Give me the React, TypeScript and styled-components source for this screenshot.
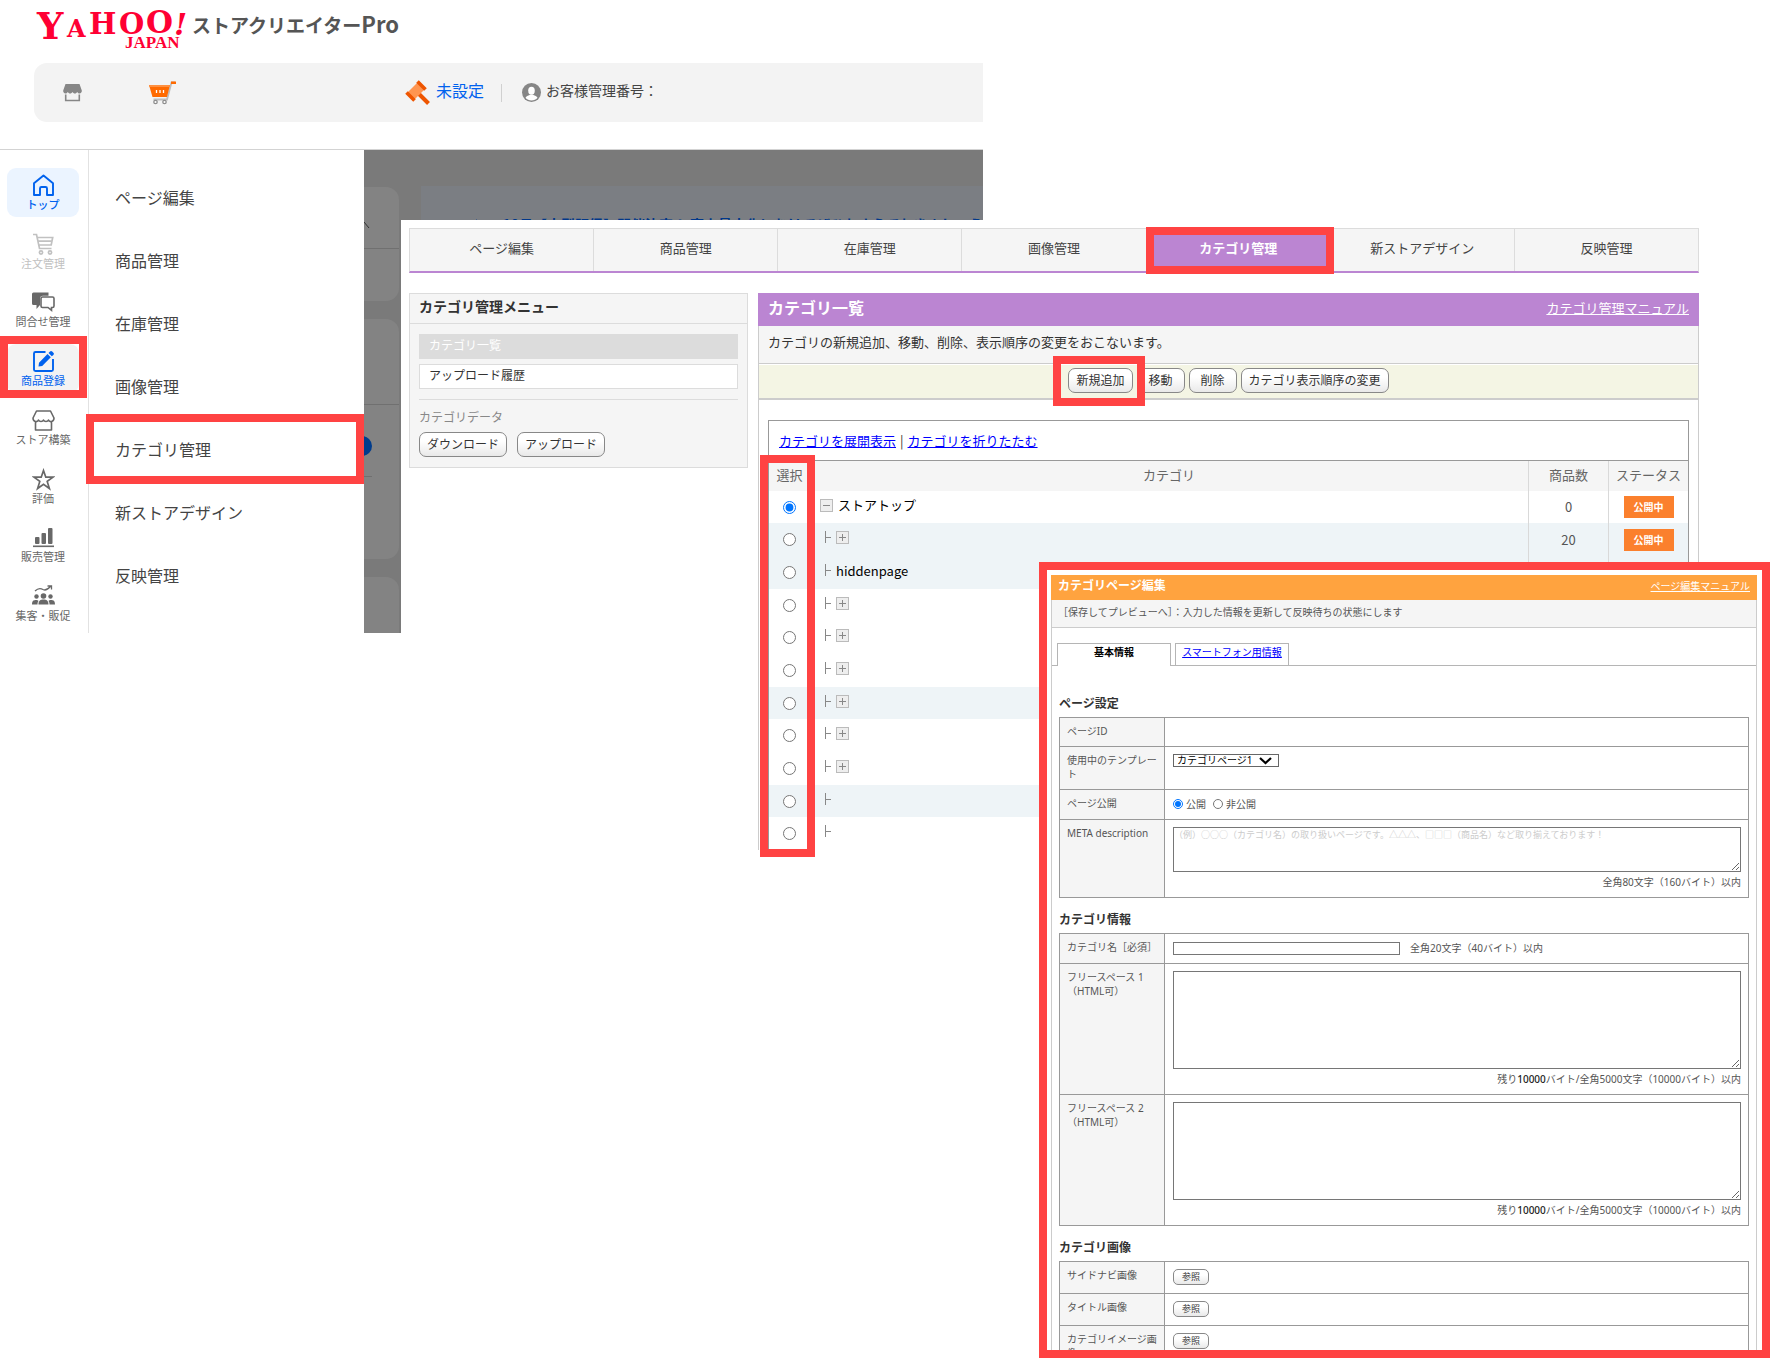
import React from 'react';
import styled, { createGlobalStyle, css } from 'styled-components';

const GlobalStyle = createGlobalStyle`
  *, *::before, *::after { box-sizing: border-box; }
  body {
    margin: 0;
    background: #fff;
    color: #333;
    font-family: "Noto Sans CJK JP", "Noto Sans", sans-serif;
    font-size: 13px;
  }
  ul, h1, h2, p { margin: 0; padding: 0; }
  ul { list-style: none; }
  button, input, select, textarea { font-family: inherit; margin: 0; }
`;

const RED = '#ff4343';
const PURPLE = '#bb85d2';

const Canvas = styled.div`
  position: relative;
  min-width: 1400px;
  height: 100vh;
  min-height: 1358px;
  overflow: hidden;
  background: #fff;
`;

const Callout = styled.span<{ $inset: string }>`
  position: absolute;
  inset: ${(p) => p.$inset};
  border: 8px solid ${RED};
  pointer-events: none;
  z-index: 2;
`;

const ColumnCallout = styled(Callout)`
  width: 55px;
`;

/* ---------- Store creator window ---------- */

const CreatorWindow = styled.section`
  position: absolute;
  top: 0;
  left: 0;
  right: 787px;
  height: 633px;
  display: flex;
  flex-direction: column;
`;

const CreatorHeader = styled.header`
  flex: 0 0 150px;
  padding-left: 34px;
  border-bottom: 1px solid #d3d3d3;
`;

const Brand = styled.div`
  display: flex;
  gap: 5px;
  height: 63px;
`;

const BrandName = styled.h1`
  padding-top: 9px;
  font-size: 19px;
  line-height: 28px;
  color: #555;
`;

const BrandLatin = styled.span`
  font-size: 22px;
`;

const AccountBar = styled.div`
  display: flex;
  align-items: center;
  height: 59px;
  padding-left: 29px;
  background: #f3f3f3;
  border-radius: 13px 0 0 13px;
`;

const BarSlot = styled.div<{ $width: number }>`
  display: flex;
  align-items: center;
  width: ${(p) => p.$width}px;
`;

const AuctionLink = styled.a`
  font-size: 16px;
  line-height: 24px;
  margin: 0 17px 6px 5px;
  color: #0062ee;
  text-decoration: none;
`;

const CustomerNumber = styled.div`
  display: flex;
  align-items: center;
  gap: 5px;
  padding-left: 20px;
  border-left: 1px solid #d0d0d0;
  height: 18px;
  font-size: 14px;
  color: #444;
  span { margin-bottom: 5px; }
`;

const CreatorBody = styled.div`
  flex: 1;
  min-height: 0;
  display: flex;
`;

const SideNav = styled.nav`
  width: 89px;
  border-right: 1px solid #e2e2e2;
  background: #fff;
`;

const SideList = styled.ul`
  height: 100%;
  display: flex;
  flex-direction: column;
  justify-content: space-between;
  padding: 18px 9px 5px 7px;
`;

const SideItem = styled.li`
  position: relative;
`;

type Tone = 'current' | 'selected' | 'muted' | 'plain';
const toneColor: Record<Tone, string> = {
  current: '#0062ee',
  selected: '#0062ee',
  muted: '#c1c1c1',
  plain: '#686868',
};

const SideLink = styled.a<{ $tone: Tone }>`
  display: flex;
  flex-direction: column;
  align-items: center;
  height: 49px;
  padding-top: 6px;
  border-radius: 9px;
  font-size: 11px;
  line-height: 14px;
  white-space: nowrap;
  text-decoration: none;
  color: ${(p) => toneColor[p.$tone]};
  background: ${(p) => (p.$tone === 'current' ? '#ebf4ff' : p.$tone === 'selected' ? '#f3f3f3' : 'transparent')};
  font-weight: ${(p) => (p.$tone === 'current' ? 500 : 400)};
`;

const Flyout = styled.ul`
  width: 275px;
  padding-top: 16px;
  background: #fff;
  z-index: 1;
`;

const FlyoutItem = styled.li`
  position: relative;
`;

const FlyoutLink = styled.a`
  display: flex;
  align-items: center;
  height: 63px;
  padding: 0 26px 2px;
  font-size: 16px;
  color: #444;
  text-decoration: none;
`;

const Backdrop = styled.div`
  flex: 1;
  display: flex;
  gap: 22px;
  min-width: 0;
  overflow: hidden;
  background: #7a7a7a;
`;

const DimCards = styled.div`
  flex: 0 0 35px;
  display: flex;
  flex-direction: column;
  gap: 18px;
  padding-top: 37px;
`;

const DimCard = styled.div<{ $height: number }>`
  flex: 0 0 ${(p) => p.$height}px;
  background: #838383;
  border-radius: 0 13px 13px 0;
`;

const DimCardHead = styled.div<{ $height: number }>`
  height: ${(p) => p.$height}px;
  padding-top: 27px;
  border-bottom: 1px solid #707070;
`;

const DimDot = styled.div`
  width: 20px;
  height: 20px;
  margin: 31px 0 20px -12px;
  border-radius: 50%;
  background: #003c8c;
`;

const DimRule = styled.div`
  width: 8px;
  border-top: 1px solid #707070;
`;

const Notice = styled.div`
  flex: 1;
  min-width: 0;
  display: flex;
  align-items: flex-start;
  gap: 25px;
  margin-top: 36px;
  padding: 28px 0 0 52px;
  overflow: hidden;
  background: #7b7e83;
  color: #00378a;
  font-size: 14px;
  font-weight: 700;
  line-height: 20px;
  white-space: nowrap;
`;

/* ---------- Category list window ---------- */

const ListWindow = styled.section`
  position: absolute;
  top: 220px;
  left: 401px;
  right: 71px;
  padding: 8px 0 0 8px;
  background: #fff;
`;

const TabBar = styled.ul`
  display: flex;
  border: 1px solid #dcdcdc;
  border-bottom: 2px solid ${PURPLE};
  background: #f5f5f5;
`;

const TabItem = styled.li`
  position: relative;
  flex: 1;
  & + & { border-left: 1px solid #dcdcdc; }
`;

const TabLink = styled.a<{ $active?: boolean }>`
  display: block;
  padding: 9px 0 13px;
  line-height: 20px;
  text-align: center;
  text-decoration: none;
  color: #444;
  ${(p) => p.$active && css`
    color: #fff;
    font-weight: 700;
    background: ${PURPLE};
  `}
`;

const Columns = styled.div`
  display: flex;
  align-items: flex-start;
  gap: 10px;
  margin-top: 20px;
`;

const MenuPanel = styled.aside`
  flex: 0 0 339px;
  border: 1px solid #dcdcdc;
  background: #f5f5f5;
  font-size: 12px;
`;

const MenuTitle = styled.h2`
  padding: 3px 9px 7px;
  font-size: 14px;
  line-height: 19px;
  border-bottom: 1px solid #dcdcdc;
`;

const MenuBody = styled.div`
  padding: 10px 9px;
`;

const MenuLinks = styled.ul`
  display: grid;
  gap: 5px;
  padding-bottom: 10px;
  border-bottom: 1px solid #dcdcdc;
`;

const MenuLink = styled.a<{ $current?: boolean }>`
  display: block;
  padding: 1px 9px 4px;
  line-height: 18px;
  border: 1px solid #dcdcdc;
  text-decoration: none;
  color: ${(p) => (p.$current ? '#fff' : '#333')};
  background: ${(p) => (p.$current ? '#dcdcdc' : '#fff')};
`;

const MenuCaption = styled.p`
  padding: 8px 0 6px;
  line-height: 18px;
  color: #888;
`;

const ButtonRow = styled.div<{ $gap: number; $center?: boolean }>`
  display: flex;
  gap: ${(p) => p.$gap}px;
  justify-content: ${(p) => (p.$center ? 'center' : 'flex-start')};
`;

const PillButton = styled.button<{ $small?: boolean }>`
  display: block;
  min-width: ${(p) => (p.$small ? 36 : 48)}px;
  height: ${(p) => (p.$small ? 16 : 25)}px;
  padding: ${(p) => (p.$small ? '0 4px 1px' : '0 7px 2px')};
  font-size: ${(p) => (p.$small ? 9 : 12)}px;
  line-height: ${(p) => (p.$small ? 12 : 18)}px;
  border: 1px solid #888;
  border-radius: ${(p) => (p.$small ? 5 : 7)}px;
  color: #333;
  background: linear-gradient(#fff 35%, #e9e9e9);
  white-space: nowrap;
`;

const Anchor = styled.span`
  position: relative;
`;

const ListMain = styled.main`
  flex: 1;
  min-width: 0;
`;

const ListHeader = styled.header`
  display: flex;
  justify-content: space-between;
  align-items: center;
  height: 33px;
  padding: 0 10px 5px;
  background: ${PURPLE};
  color: #fff;
`;

const ListTitle = styled.h2`
  font-size: 16px;
  line-height: 24px;
`;

const HeaderLink = styled.a`
  color: #fff;
`;

const ListFrame = styled.div`
  border: solid #ccc;
  border-width: 0 1px;
`;

const ListLead = styled.p`
  padding: 6px 9px 11px;
  line-height: 20px;
  background: #f5f5f5;
  border-bottom: 1px solid #ccc;
`;

const Toolbar = styled.div`
  padding: 3px 0 5px;
  margin-top: 1px;
  background: #f4f5e4;
  border-bottom: 2px solid #ccc;
`;

const TreeBox = styled.div`
  position: relative;
  margin: 20px 9px 0;
  border: 1px solid #999;
  border-bottom: 0;
`;

const TreeTools = styled.div`
  display: flex;
  gap: 4px;
  padding: 10px 10px 9px;
  line-height: 20px;
  border-bottom: 1px solid #999;
  a { color: #00f; }
`;

const TreeTable = styled.table`
  width: 100%;
  table-layout: fixed;
  border-collapse: separate;
  border-spacing: 0;
  th {
    height: 30px;
    padding: 0 0 3px;
    font-weight: 400;
    line-height: 20px;
    color: #666;
    background: #f5f5f5;
  }
  th:first-child { width: 41px; }
  th:nth-child(n + 3) { width: 80px; }
  th:nth-child(n + 3), td:nth-child(n + 3) { border-left: 1px solid #d9d9d9; }
`;

const TreeRow = styled.tr<{ $tint: boolean }>`
  background: ${(p) => (p.$tint ? '#eef4f7' : '#fff')};
  td { height: 33px; padding: 0; text-align: center; line-height: 20px; color: #555; }
  &:nth-child(3n + 1) td { height: 32px; }
`;

const Radio = styled.input.attrs({ type: 'radio' })<{ $small?: boolean }>`
  display: block;
  width: ${(p) => (p.$small ? 10 : 13)}px;
  height: ${(p) => (p.$small ? 10 : 13)}px;
`;

const RadioCell = styled.label`
  display: flex;
  justify-content: center;
`;

const TreeName = styled.div`
  display: flex;
  align-items: center;
  gap: 5px;
  padding: 0 0 4px 10px;
  color: #000;
`;

const Badge = styled.span`
  display: block;
  width: 50px;
  margin: 0 auto;
  padding: 3px 0;
  font-size: 10px;
  font-weight: 700;
  line-height: 16px;
  color: #fff;
  background: #fb802d;
`;

/* ---------- Category page editor window ---------- */

const EditorWindow = styled.section`
  position: absolute;
  top: 562px;
  left: 1039px;
  right: 0;
  bottom: 0;
  overflow: hidden;
  padding: 5px 5px 0 4px;
  border: 8px solid ${RED};
  background: #fff;
  font-family: "Noto Sans", "Noto Sans CJK JP", sans-serif;
  font-size: 10px;
  line-height: 14px;
  color: #555;
`;

const EditorHeader = styled.header`
  display: flex;
  justify-content: space-between;
  align-items: center;
  height: 25px;
  padding: 0 7px 3px;
  background: #ffa33f;
  color: #fff;
`;

const EditorTitle = styled.h2`
  font-size: 12px;
  line-height: 18px;
`;

const EditorFrame = styled.div`
  border: solid #ccc;
  border-width: 0 1px;
`;

const EditorLead = styled.p`
  padding: 5px 6px 8px;
  background: #f5f5f5;
  border-bottom: 1px solid #ccc;
`;

const EditorTabs = styled.ul`
  display: flex;
  gap: 4px;
  margin-top: 15px;
  padding-left: 5px;
  border-bottom: 1px solid #b5b5b5;
`;

const EditorTab = styled.li<{ $active?: boolean }>`
  width: 114px;
  height: 22px;
  text-align: center;
  line-height: 16px;
  border: 1px solid #b5b5b5;
  border-bottom: 0;
  background: #fff;
  a { color: #00f; }
  ${(p) => p.$active && css`
    height: 23px;
    margin-bottom: -1px;
    font-weight: 700;
    a { color: #000; text-decoration: none; }
  `}
`;

const EditorBody = styled.div`
  padding: 16px 7px 0;
`;

const SectionTitle = styled.h2`
  padding: 14px 0 5px;
  font-size: 12px;
  line-height: 16px;
  color: #333;
`;

const FormTable = styled.table`
  width: 100%;
  table-layout: fixed;
  border-collapse: collapse;
  th, td {
    border: 1px solid #999;
    vertical-align: top;
  }
  th {
    width: 105px;
    padding: 6px 7px 8px;
    text-align: left;
    font-weight: 400;
    background: #f5f5f5;
  }
  td { padding: 7px 7px 8px 8px; }
`;

const SelectWrap = styled.div`
  position: relative;
  width: 106px;
  svg { position: absolute; right: 7px; top: 3px; pointer-events: none; }
`;

const TemplateSelect = styled.select`
  appearance: none;
  display: block;
  width: 100%;
  height: 13px;
  padding: 0 3px;
  font-size: 10px;
  line-height: 11px;
  border: 1px solid #666;
  border-radius: 0;
  background: #fff;
  color: #000;
`;

const RadioGroup = styled.div`
  display: flex;
  gap: 7px;
`;

const RadioLabel = styled.label`
  display: flex;
  align-items: center;
  gap: 3px;
  line-height: 14px;
`;

const TextArea = styled.textarea<{ $height: number }>`
  display: block;
  width: 100%;
  height: ${(p) => p.$height}px;
  padding: 1px 0;
  font-size: 9px;
  line-height: 12px;
  border: 1px solid #767676;
  border-radius: 0;
  &::placeholder { color: #ccc; font-family: "Noto Sans CJK JP", sans-serif; }
`;

const Note = styled.p`
  margin-top: 3px;
  text-align: right;
  b { font-weight: 500; color: #222; }
`;

const NameLine = styled.div`
  display: flex;
  align-items: center;
  gap: 10px;
`;

const NameInput = styled.input`
  width: 227px;
  height: 13px;
  padding: 0 2px;
  font-size: 10px;
  border: 1px solid #767676;
`;

/* ---------- Drawings ---------- */

const YahooLogo = () => (
  <svg width="153" height="60" viewBox="34 0 153 60" role="img" aria-label="Yahoo! JAPAN" fill="#ff0033">
    <g fontFamily='"DejaVu Serif", serif' fontWeight="700">
      <text x="37" y="39" fontSize="37">Y</text>
      <text x="67" y="37" fontSize="24">A</text>
      <text x="89" y="34" fontSize="29">H</text>
      <text x="119" y="34" fontSize="29">O</text>
      <text x="146" y="33" fontSize="31">O</text>
      <text x="174" y="35" fontSize="30" fontStyle="italic">!</text>
    </g>
    <text x="125" y="48" fontFamily='"Liberation Serif", serif' fontWeight="700" fontSize="17">JAPAN</text>
  </svg>
);

const ShopSolid = () => (
  <svg width="19" height="19" viewBox="0 0 19 19" fill="#868686">
    <path d="M2.5 1h14L18.8 7.5c.2 1.600-.9 2.900-2.300 2.900-1 0-1.900-.6-2.300-1.500-.4.900-1.300 1.500-2.300 1.500s-2-.6-2.400-1.500c-.4.900-1.400 1.500-2.400 1.500s-1.900-.6-2.300-1.500c-.4.900-1.300 1.500-2.300 1.500C1 10.400 0 9.100.2 7.500z" />
    <path d="M2.700 11.500v6h13.600v-6" fill="none" stroke="#868686" strokeWidth="1.600" />
  </svg>
);

const OrangeCart = () => (
  <svg width="27" height="24" viewBox="0 0 27 24">
    <path d="M26 1.500h-3.500L18 18.500H4.500" fill="none" stroke="#bdbdbd" strokeWidth="1.800" />
    <path d="M22 .5h5v2.500h-5z" fill="#ff6a00" />
    <path d="M0 4h21l-3 12H3.500z" fill="#ff6a00" />
    <path d="M0 4h21l-.5 2H.5z" fill="#ff9040" />
    <path d="M7.500 9v3M11 9v3M14.500 9v3" stroke="#fff" strokeWidth="1.300" />
    <circle cx="6.500" cy="21" r="1.700" fill="#fff" stroke="#8d8d8d" strokeWidth="1.300" />
    <circle cx="15.500" cy="21" r="1.700" fill="#fff" stroke="#8d8d8d" strokeWidth="1.300" />
  </svg>
);

const Gavel = () => (
  <svg width="26" height="26" viewBox="0 0 26 26">
    <path d="M13.500 13.500l10 10" stroke="#ee5500" strokeWidth="4" />
    <path d="M2.500 12.500L12.500 2.500l7 7-10 10z" fill="#ff9550" />
    <path d="M12.500 1.500l8 8M1.500 12.500l8 8" stroke="#ee5500" strokeWidth="3.600" />
  </svg>
);

const UserBadge = () => (
  <svg width="19" height="19" viewBox="0 0 19 19">
    <circle cx="9.500" cy="9.500" r="9.500" fill="#868686" />
    <ellipse cx="9.500" cy="7.800" rx="3.300" ry="4" fill="#fff" />
    <path d="M3.500 14.800c1-2 3.500-2.200 4.500-3h3c1 .8 3.500 1 4.500 3-1.500 1.700-3.600 2.600-6 2.600s-4.500-.9-6-2.600z" fill="#fff" />
  </svg>
);

const iconProps = {
  width: 23,
  height: 23,
  viewBox: '0 0 23 23',
  fill: 'none',
  stroke: 'currentColor',
  strokeWidth: 1.6,
} as const;

const HomeIcon = () => (
  <svg {...iconProps} strokeWidth={1.9}>
    <path d="M2 9.200L11.500 1.500 21 9.200V21h-6v-6.500a1.500 1.500 0 0 0-1.500-1.500h-4A1.500 1.500 0 0 0 8 14.500V21H2z" strokeLinejoin="round" />
  </svg>
);

const CartIcon = () => (
  <svg {...iconProps} strokeWidth={1.700}>
    <path d="M1 1.500h3.500L7.500 15.500h12M5.200 4.500h15.500l-1.500 7.500H6.800M6.200 8.200h13.600" />
    <circle cx="9" cy="19.500" r="1.600" />
    <circle cx="18" cy="19.500" r="1.600" />
  </svg>
);

const ChatIcon = () => (
  <svg {...iconProps}>
    <path d="M1.500 1.500h15v3.200H11a3 3 0 0 0-3 3V14l-3.500 4v-4H1.500A1.500 1.500 0 0 1 0 12.500V3a1.500 1.500 0 0 1 1.500-1.500z" fill="currentColor" stroke="none" />
    <path d="M10.500 6h10a1.500 1.500 0 0 1 1.500 1.500v7.500a1.500 1.500 0 0 1-1.500 1.500H19.500v2.800l-3.500-2.800h-5.500A1.500 1.500 0 0 1 9 15V7.500A1.500 1.500 0 0 1 10.500 6z" />
  </svg>
);

const EditIcon = () => (
  <svg {...iconProps} strokeWidth={1.900}>
    <path d="M13.500 2H3.500A1.500 1.500 0 0 0 2 3.500v16A1.500 1.500 0 0 0 3.500 21h16a1.500 1.500 0 0 0 1.500-1.500V9" />
    <path d="M7 12.800L15.500 4l3.300 3.300L10.200 16 6.500 16.500zM16.500 3l1.500-1.500a1.500 1.500 0 0 1 2.200 0l1.200 1.200a1.500 1.500 0 0 1 0 2.200L19.800 6.300z" fill="currentColor" stroke="none" />
  </svg>
);

const ShopIcon = () => (
  <svg {...iconProps}>
    <path d="M4.500 2h14l3.500 7c0 4-4.500 4.500-5.500 2-1 2-4 2-5 0-1 2-4 2-5 0C5.500 13.500 1 13 1 9zM3.500 12.500V21h16v-8.500" strokeLinejoin="round" />
  </svg>
);

const StarIcon = () => (
  <svg {...iconProps} strokeWidth={1.700}>
    <path d="M11.500 2.500l2.300 6.700h7.200l-5.800 4.200 2.200 7.100-5.900-4.300-5.900 4.300 2.200-7.100L2 9.200h7.200z" />
  </svg>
);

const ChartIcon = () => (
  <svg {...iconProps} fill="currentColor" stroke="none">
    <rect x="3" y="11" width="4.500" height="7" rx="1" />
    <rect x="9.500" y="7" width="4.500" height="11" rx="1" />
    <rect x="16" y="2" width="4.500" height="16" rx="1" />
    <rect x="1" y="19.500" width="21" height="1.600" />
  </svg>
);

const CrowdIcon = () => (
  <svg {...iconProps} strokeWidth={1.300}>
    <path d="M3 6c3-3 5.500-3 8-1.500 3 1.500 5-.5 7.500-3M15.500 1h4v3.500" />
    <g fill="currentColor" stroke="none">
      <circle cx="4.500" cy="11.500" r="2.200" />
      <circle cx="18.500" cy="11.500" r="2.200" />
      <circle cx="11.500" cy="11" r="2.800" />
      <path d="M0 19.500c0-4 2-4.500 4-4.500 1 0 2 .3 2.500 1-.8 1-1 2-1 3.500zM23 19.500c0-4-2-4.500-4-4.500-1 0-2 .3-2.500 1 .8 1 1 2 1 3.500zM6.500 19.500c0-4 2-5 5-5s5 1 5 5z" />
    </g>
  </svg>
);

const TreeMark = ({ open, branch, box }: { open?: boolean; branch: boolean; box: boolean }) => (
  <>
    {branch && (
      <svg width="11" height="13" viewBox="0 0 11 13" stroke="#888" fill="none">
        <path d="M5.500 0v12M5.500 6.500h5.500" />
      </svg>
    )}
    {box && (
      <svg width="13" height="13" viewBox="0 0 13 13" fill="none">
        <rect x=".5" y=".5" width="12" height="12" fill="#eee" stroke="#bbb" />
        <path d={open ? 'M3 6.500h7' : 'M3 6.500h7M6.500 3v7'} stroke="#888" />
      </svg>
    )}
  </>
);

/* ---------- Data ---------- */

const sideItems: { label: string; tone: Tone; Icon: () => React.ReactElement }[] = [
  { label: 'トップ', tone: 'current', Icon: HomeIcon },
  { label: '注文管理', tone: 'muted', Icon: CartIcon },
  { label: '問合せ管理', tone: 'plain', Icon: ChatIcon },
  { label: '商品登録', tone: 'selected', Icon: EditIcon },
  { label: 'ストア構築', tone: 'plain', Icon: ShopIcon },
  { label: '評価', tone: 'plain', Icon: StarIcon },
  { label: '販売管理', tone: 'plain', Icon: ChartIcon },
  { label: '集客・販促', tone: 'plain', Icon: CrowdIcon },
];

const sections = ['ページ編集', '商品管理', '在庫管理', '画像管理', 'カテゴリ管理', '新ストアデザイン', '反映管理'];
const activeSection = 'カテゴリ管理';

interface Category {
  name?: string;
  root?: boolean;
  box: boolean;
  tint: boolean;
  count?: number;
}

const categories: Category[] = [
  { name: 'ストアトップ', root: true, box: true, tint: false, count: 0 },
  { box: true, tint: true, count: 20 },
  { name: 'hiddenpage', box: false, tint: true },
  { box: true, tint: false },
  { box: true, tint: false },
  { box: true, tint: false },
  { box: true, tint: true },
  { box: true, tint: false },
  { box: true, tint: false },
  { box: false, tint: true },
  { box: false, tint: false },
];

const freeSpaces = [1, 2];
const imageFields = ['サイドナビ画像', 'タイトル画像', 'カテゴリイメージ画像'];

/* ---------- Windows ---------- */

const Creator = () => (
  <CreatorWindow>
    <CreatorHeader>
      <Brand>
        <YahooLogo />
        <BrandName>
          ストアクリエイター<BrandLatin>Pro</BrandLatin>
        </BrandName>
      </Brand>
      <AccountBar>
        <BarSlot $width={86}><ShopSolid /></BarSlot>
        <BarSlot $width={256}><OrangeCart /></BarSlot>
        <Gavel />
        <AuctionLink href="#auction">未設定</AuctionLink>
        <CustomerNumber>
          <UserBadge />
          <span>お客様管理番号：</span>
        </CustomerNumber>
      </AccountBar>
    </CreatorHeader>
    <CreatorBody>
      <SideNav>
        <SideList>
          {sideItems.map(({ label, tone, Icon }) => (
            <SideItem key={label}>
              <SideLink href="#side" $tone={tone}>
                <Icon />
                {label}
              </SideLink>
              {tone === 'selected' && <Callout $inset="-8px -8px -5px -7px" />}
            </SideItem>
          ))}
        </SideList>
      </SideNav>
      <Flyout>
        {sections.map((name) => (
          <FlyoutItem key={name}>
            <FlyoutLink href="#section">{name}</FlyoutLink>
            {name === activeSection && <Callout $inset="-4px 0 -3px -3px" />}
          </FlyoutItem>
        ))}
      </Flyout>
      <Backdrop>
        <DimCards>
          <DimCard $height={114}>
            <DimCardHead $height={62}>
              <svg width="6" height="8" viewBox="0 0 6 8" fill="none" stroke="#333"><path d="M0 1l5 6" /></svg>
            </DimCardHead>
          </DimCard>
          <DimCard $height={240}>
            <DimCardHead $height={86} />
            <DimDot />
            <DimRule />
          </DimCard>
          <DimCard $height={80} />
        </DimCards>
        <Notice>
          <svg width="9" height="16" viewBox="0 0 9 16" fill="currentColor"><path d="M9 2v14L0 8z" /></svg>
          <span>10月【大型販促】開催決定！ 売上最大化にむけてぜひおさえておきましょう</span>
        </Notice>
      </Backdrop>
    </CreatorBody>
  </CreatorWindow>
);

const CategoryList = () => (
  <ListWindow>
    <TabBar>
      {sections.map((name) => (
        <TabItem key={name}>
          <TabLink href="#tab" $active={name === activeSection}>{name}</TabLink>
          {name === activeSection && <Callout $inset="-2px -4px -3px -1px" />}
        </TabItem>
      ))}
    </TabBar>
    <Columns>
      <MenuPanel>
        <MenuTitle>カテゴリ管理メニュー</MenuTitle>
        <MenuBody>
          <MenuLinks>
            <li><MenuLink href="#list" $current>カテゴリ一覧</MenuLink></li>
            <li><MenuLink href="#history">アップロード履歴</MenuLink></li>
          </MenuLinks>
          <MenuCaption>カテゴリデータ</MenuCaption>
          <ButtonRow $gap={10}>
            <PillButton type="button">ダウンロード</PillButton>
            <PillButton type="button">アップロード</PillButton>
          </ButtonRow>
        </MenuBody>
      </MenuPanel>
      <ListMain>
        <ListHeader>
          <ListTitle>カテゴリ一覧</ListTitle>
          <HeaderLink href="#manual">カテゴリ管理マニュアル</HeaderLink>
        </ListHeader>
        <ListFrame>
          <ListLead>カテゴリの新規追加、移動、削除、表示順序の変更をおこないます。</ListLead>
          <Toolbar>
            <ButtonRow $gap={4} $center>
              <Anchor>
                <PillButton type="button">新規追加</PillButton>
                <Callout $inset="-12px -12px -13px -15px" />
              </Anchor>
              <PillButton type="button">移動</PillButton>
              <PillButton type="button">削除</PillButton>
              <PillButton type="button">カテゴリ表示順序の変更</PillButton>
            </ButtonRow>
          </Toolbar>
          <TreeBox>
            <TreeTools>
              <a href="#expand">カテゴリを展開表示</a>
              <span>|</span>
              <a href="#collapse">カテゴリを折りたたむ</a>
            </TreeTools>
            <TreeTable>
              <thead>
                <tr>
                  <th>選択</th>
                  <th>カテゴリ</th>
                  <th>商品数</th>
                  <th>ステータス</th>
                </tr>
              </thead>
              <tbody>
                {categories.map((c, i) => (
                  <TreeRow key={i} $tint={c.tint}>
                    <td>
                      <RadioCell>
                        <Radio name="category" defaultChecked={i === 0} aria-label={c.name ?? `カテゴリ${i}`} />
                      </RadioCell>
                    </td>
                    <td>
                      <TreeName>
                        <TreeMark branch={!c.root} box={c.box} open={c.root} />
                        {c.name}
                      </TreeName>
                    </td>
                    <td>{c.count}</td>
                    <td>{i < 3 && <Badge>公開中</Badge>}</td>
                  </TreeRow>
                ))}
              </tbody>
            </TreeTable>
            <ColumnCallout $inset="34px auto -7px -9px" />
          </TreeBox>
        </ListFrame>
      </ListMain>
    </Columns>
  </ListWindow>
);

const PageEditor = () => (
  <EditorWindow>
    <EditorHeader>
      <EditorTitle>カテゴリページ編集</EditorTitle>
      <HeaderLink href="#edit-manual">ページ編集マニュアル</HeaderLink>
    </EditorHeader>
    <EditorFrame>
      <EditorLead>［保存してプレビューへ］：入力した情報を更新して反映待ちの状態にします</EditorLead>
      <EditorTabs>
        <EditorTab $active><a href="#basic">基本情報</a></EditorTab>
        <EditorTab><a href="#phone">スマートフォン用情報</a></EditorTab>
      </EditorTabs>
      <EditorBody>
        <SectionTitle>ページ設定</SectionTitle>
        <FormTable>
          <tbody>
            <tr>
              <th>ページID</th>
              <td />
            </tr>
            <tr>
              <th><label htmlFor="template">使用中のテンプレート</label></th>
              <td>
                <SelectWrap>
                  <TemplateSelect id="template">
                    <option>カテゴリページ1</option>
                  </TemplateSelect>
                  <svg width="13" height="8" viewBox="0 0 13 8" fill="none" stroke="#000" strokeWidth="2.200">
                    <path d="M1 1l5.500 5L12 1" />
                  </svg>
                </SelectWrap>
              </td>
            </tr>
            <tr>
              <th>ページ公開</th>
              <td>
                <RadioGroup>
                  <RadioLabel><Radio $small name="publish" defaultChecked />公開</RadioLabel>
                  <RadioLabel><Radio $small name="publish" />非公開</RadioLabel>
                </RadioGroup>
              </td>
            </tr>
            <tr>
              <th><label htmlFor="meta">META description</label></th>
              <td>
                <TextArea
                  id="meta"
                  $height={45}
                  placeholder="（例）○○○（カテゴリ名）の取り扱いページです。△△△、□□□（商品名）など取り揃えております！"
                />
                <Note>全角80文字（160バイト）以内</Note>
              </td>
            </tr>
          </tbody>
        </FormTable>
        <SectionTitle>カテゴリ情報</SectionTitle>
        <FormTable>
          <tbody>
            <tr>
              <th><label htmlFor="name">カテゴリ名［必須］</label></th>
              <td>
                <NameLine>
                  <NameInput id="name" type="text" />
                  <span>全角20文字（40バイト）以内</span>
                </NameLine>
              </td>
            </tr>
            {freeSpaces.map((n) => (
              <tr key={n}>
                <th><label htmlFor={`free${n}`}>フリースペース {n}<br />（HTML可）</label></th>
                <td>
                  <TextArea id={`free${n}`} $height={98} />
                  <Note>残り<b>10000</b>バイト/全角5000文字（10000バイト）以内</Note>
                </td>
              </tr>
            ))}
          </tbody>
        </FormTable>
        <SectionTitle>カテゴリ画像</SectionTitle>
        <FormTable>
          <tbody>
            {imageFields.map((name) => (
              <tr key={name}>
                <th>{name}</th>
                <td><PillButton type="button" $small>参照</PillButton></td>
              </tr>
            ))}
          </tbody>
        </FormTable>
      </EditorBody>
    </EditorFrame>
  </EditorWindow>
);

export default function App() {
  return (
    <>
      <GlobalStyle />
      <Canvas>
        <Creator />
        <CategoryList />
        <PageEditor />
      </Canvas>
    </>
  );
}
